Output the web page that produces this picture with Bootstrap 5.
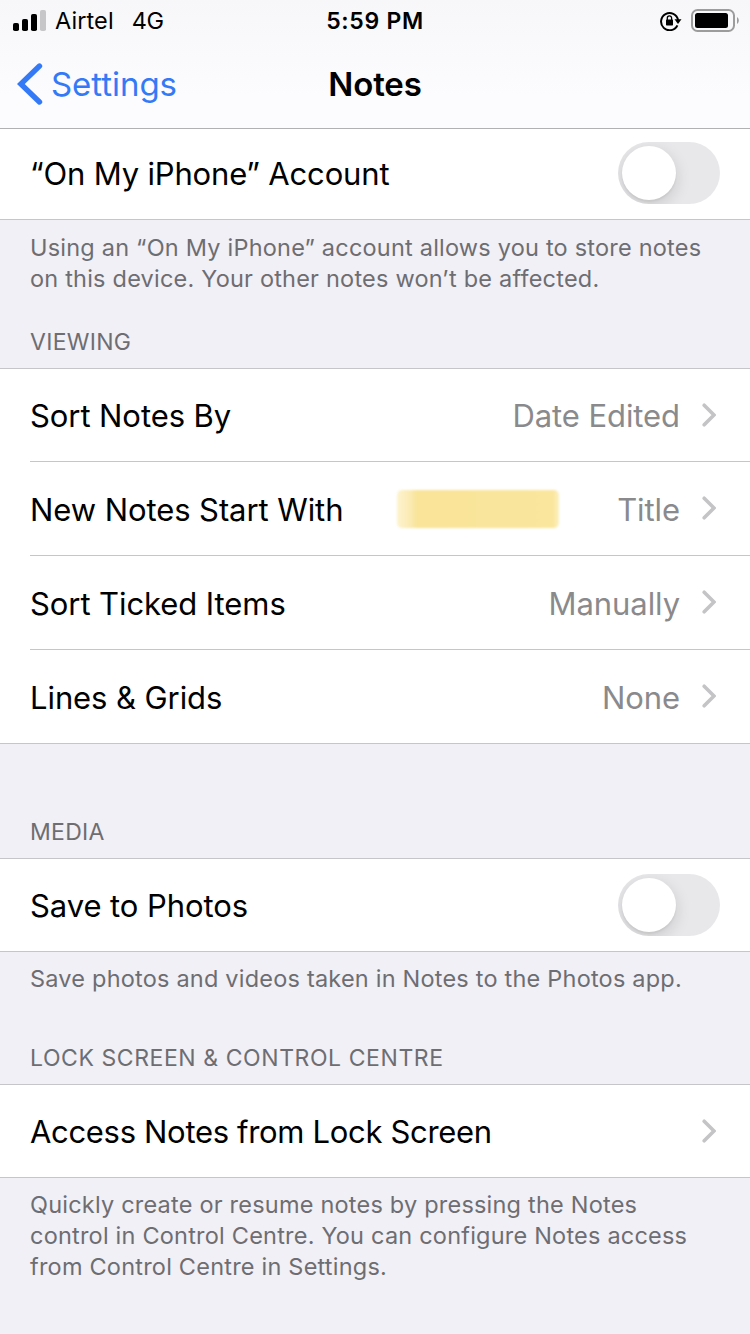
<!DOCTYPE html>
<html lang="en">
<head>
<meta charset="utf-8">
<meta name="viewport" content="width=device-width, initial-scale=1">
<title>Notes</title>
<link rel="stylesheet" href="https://cdn.jsdelivr.net/npm/bootstrap@5.3.0/dist/css/bootstrap.min.css">
<style>
  body { font-family: Inter, "Liberation Sans", sans-serif; background: #f1f0f6; color: #000; overflow: hidden; }
  svg { display: block; flex: none; }
  .top-area { height: 129px; background: linear-gradient(#f7f7f9, #fcfcfe 75%); border-bottom: 1px solid #b1b1b4; }
  .status-bar { height: 40px; font-size: 23.5px; line-height: 40px; padding: 0 12px 0 13px; display: grid; grid-template-columns: 1fr auto 1fr; }
  .carrier { margin-left: 9px; letter-spacing: .1px; }
  .network { margin-left: 18px; letter-spacing: -.5px; }
  .clock { font-weight: 600; font-size: 23px; line-height: 42px; letter-spacing: .7px; margin-right: 1px; }
  .title-bar { height: 88px; display: grid; grid-template-columns: 1fr auto 1fr; padding: 0 17px; }
  .back-link { color: #347af6; font-size: 33px; letter-spacing: -.05px; gap: 8px; }
  .back-link span { padding-top: 2px; }
  .screen-title { font-size: 33px; font-weight: 600; line-height: 88px; letter-spacing: -.1px; }
  .settings-group { background: #fff; border-top: 1px solid #c6c6c9; border-bottom: 1px solid #c6c6c9; padding-left: 30px; }
  .settings-row { height: 92px; font-size: 31px; padding-right: 30px; letter-spacing: -.08px; }
  .settings-row > span:not(.marker) { padding-top: 4px; }
  .settings-row + .settings-row { height: 94px; border-top: 1px solid #c6c6c9; }
  .settings-group.first-group { border-top: 0; }
  .first-group .settings-row { height: 90px; padding-bottom: 2px; letter-spacing: -.17px; }
  .first-group .settings-row > span { padding-top: 2px; }
  .row-value { color: #8a8a8d; margin-right: 22px; }
  .chevron { margin-right: 4px; }
  .marker { width: 162px; height: 38px; margin: 1px 58px 0 0; border-radius: 5px; filter: blur(1px);
    background: linear-gradient(90deg, #fdf3cf 0, #fbeab0 14px, #f9e499 20px, #fae69d 96%, #fcf0c2); }
  .note-text { font-size: 23.5px; line-height: 31.3px; color: #6d6d72; padding: 12px 0 0 30px; letter-spacing: .21px; }
  .note-text.raised { padding-top: 11px; }
  .group-label { font-size: 23px; font-weight: 400; line-height: 28px; color: #6d6d72; padding: 33px 0 0 30px; height: 73px; letter-spacing: .3px; }
  .group-label.spaced { padding-top: 74px; height: 114px; }
  .group-label.airy { letter-spacing: .57px; }
  .tight { letter-spacing: -.32px; }
  .toggle { width: 102px; height: 62px; border-radius: 31px; background: #e8e8ea; padding: 4px; overflow: hidden; }
  .toggle-knob { width: 54px; height: 54px; border-radius: 50%; background: #fff; box-shadow: 0 5px 16px rgba(0,0,0,.14), 0 2px 2px rgba(0,0,0,.05); }
</style>
</head>
<body>
<svg width="0" height="0" class="position-absolute" aria-hidden="true">
  <symbol id="chev" viewBox="0 0 14 24"><path d="M2.200 2.200 12 12 2.200 21.800" fill="none" stroke="#c4c4c7" stroke-width="3.600" stroke-linecap="round" stroke-linejoin="miter"/></symbol>
</svg>
<header class="top-area">
  <div class="status-bar">
    <div class="d-flex align-items-center">
      <svg width="33" height="21" viewBox="0 0 33 21" style="margin-top:-1px"><rect y="13" width="6" height="8" rx="1.8"/><rect x="9" y="9" width="6" height="12" rx="1.8"/><rect x="18" y="4" width="6" height="17" rx="1.8"/><rect x="27" width="6" height="21" rx="1.8" fill="#c6c6c8"/></svg>
      <span class="carrier">Airtel</span><span class="network">4G</span>
    </div>
    <div class="clock">5:59 PM</div>
    <div class="d-flex align-items-center justify-content-end">
      <svg width="22" height="20" viewBox="0 0 22 20" style="margin-right:9px"><path d="M17.400 14.400A8.600 8.600 0 1 1 18.100 9" fill="none" stroke="#000" stroke-width="2"/><path d="M14.500 8.300h7l-3.500 4.800z"/><rect x="6" y="8.600" width="7" height="5.800" rx=".7"/><path d="M7.300 9V7a2.100 2.100 0 0 1 4.300 0v2" fill="none" stroke="#000" stroke-width="1.300"/></svg>
      <svg width="48" height="23" viewBox="0 0 48 23" style="margin:-1px -1px 0 0"><rect x="1" y="1" width="42" height="21" rx="5.500" fill="none" stroke="#9c9c9d" stroke-width="2"/><rect x="4" y="4" width="33" height="15" rx="2.500"/><path d="M46 8c2.400 1.500 2.400 5.500 0 7z" fill="#9c9c9d"/></svg>
    </div>
  </div>
  <nav class="title-bar">
    <a class="back-link d-flex align-items-center text-decoration-none" href="#"><svg width="26" height="42" viewBox="0 0 26 42"><path d="M22.500 3 3.800 21 22.500 39" fill="none" stroke="#347af6" stroke-width="5.400" stroke-linecap="round"/></svg><span>Settings</span></a>
    <h1 class="screen-title m-0">Notes</h1>
    <span></span>
  </nav>
</header>
<main>
  <section class="settings-group first-group">
    <div class="settings-row d-flex align-items-center justify-content-between"><span>“On My iPhone” Account</span><div class="toggle"><div class="toggle-knob"></div></div></div>
  </section>
  <p class="note-text mb-0">Using an “On My iPhone” account allows you to store notes<br>on this device. Your other notes won’t be affected.</p>
  <h2 class="group-label mb-0">VIEWING</h2>
  <section class="settings-group">
    <div class="settings-row d-flex align-items-center"><span class="me-auto">Sort Notes By</span><span class="row-value">Date Edited</span><svg class="chevron" width="14" height="24"><use href="#chev"/></svg></div>
    <div class="settings-row d-flex align-items-center"><span class="me-auto">New Notes Start With</span><span class="marker"></span><span class="row-value">Title</span><svg class="chevron" width="14" height="24"><use href="#chev"/></svg></div>
    <div class="settings-row d-flex align-items-center"><span class="me-auto">Sort Ticked Items</span><span class="row-value">Manually</span><svg class="chevron" width="14" height="24"><use href="#chev"/></svg></div>
    <div class="settings-row d-flex align-items-center"><span class="me-auto">Lines &amp; Grids</span><span class="row-value">None</span><svg class="chevron" width="14" height="24"><use href="#chev"/></svg></div>
  </section>
  <h2 class="group-label spaced mb-0">MEDIA</h2>
  <section class="settings-group">
    <div class="settings-row d-flex align-items-center justify-content-between"><span>Save to Photos</span><div class="toggle"><div class="toggle-knob"></div></div></div>
  </section>
  <p class="note-text raised mb-0" style="height:59px">Save photos and videos taken in Notes to the Photos app.</p>
  <h2 class="group-label airy mb-0">LOCK SCREEN &amp; CONTROL CENTRE</h2>
  <section class="settings-group">
    <div class="settings-row d-flex align-items-center"><span class="me-auto tight">Access Notes from Lock Screen</span><svg class="chevron" width="14" height="24"><use href="#chev"/></svg></div>
  </section>
  <p class="note-text raised mb-0">Quickly create or resume notes by pressing the Notes<br>control in Control Centre. You can configure Notes access<br>from Control Centre in Settings.</p>
</main>
<script src="https://cdn.jsdelivr.net/npm/bootstrap@5.3.0/dist/js/bootstrap.bundle.min.js"></script>
</body>
</html>
